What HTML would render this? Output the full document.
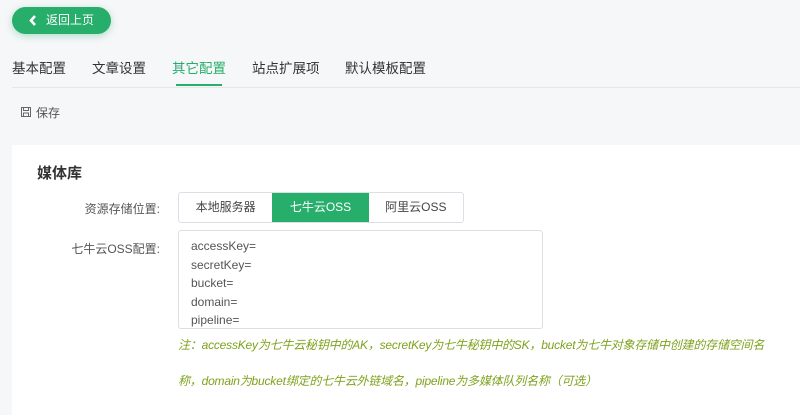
<!DOCTYPE html>
<html><head><meta charset="utf-8"><style>
*{margin:0;padding:0;box-sizing:border-box}
body{width:800px;height:415px;background:#f6f7f9;font-family:"Liberation Sans","Noto Sans CJK SC",sans-serif;color:#333;position:relative;overflow:hidden}
.back{position:absolute;left:12px;top:7px;width:99px;height:27px;border-radius:14px;background:#27ae6b;color:#fff;font-size:12px;line-height:27px;padding-left:34px;box-shadow:0 2px 8px rgba(39,174,107,.35)}
.back svg{position:absolute;left:17px;top:8px}
.tab{position:absolute;top:57px;font-size:13.5px;color:#333}
.line{position:absolute;left:12px;right:0;top:87px;height:1px;background:#e4e6ea}
.ul{position:absolute;left:176px;top:84px;width:46px;height:2px;background:#27ae6b}
.save{position:absolute;left:36px;top:104px;font-size:12px;color:#555}
.card{position:absolute;left:12px;top:145px;right:0;bottom:0;background:#fff}
.title{position:absolute;left:37px;top:162px;font-size:15px;font-weight:bold;color:#333}
.lbl{position:absolute;right:640px;font-size:12px;color:#555}
.seg{position:absolute;left:178px;top:192px;width:286px;height:31px;border:1px solid #dcdfe6;border-radius:3px;display:flex;font-size:12px;overflow:hidden}
.seg div{text-align:center;line-height:29px;color:#444}
.ta{position:absolute;left:178px;top:230px;width:365px;height:99px;border:1px solid #dcdfe6;border-radius:3px;padding:6px 12px;font-size:12px;line-height:18.6px;color:#555}
.note{position:absolute;left:178px;top:327px;width:600px;font-size:12px;font-style:italic;line-height:36px;color:#7ea21c;letter-spacing:-0.2px}
</style></head><body>
<div class="back"><svg width="8" height="11" viewBox="0 0 8 11"><path d="M6 1L2 5.5 6 10" stroke="#fff" stroke-width="2.6" fill="none"/></svg>返回上页</div>
<div class="tab" style="left:12px">基本配置</div>
<div class="tab" style="left:92px">文章设置</div>
<div class="tab" style="left:172px;color:#27ae6b">其它配置</div>
<div class="tab" style="left:252px">站点扩展项</div>
<div class="tab" style="left:345px">默认模板配置</div>
<div class="line"></div><div class="ul"></div>
<svg style="position:absolute;left:21px;top:107px" width="10" height="10" viewBox="0 0 10 10"><rect x="0.5" y="0.5" width="9" height="9" fill="none" stroke="#666"/><rect x="2.5" y="0.5" width="5" height="3" fill="none" stroke="#666"/><rect x="2.5" y="6" width="5" height="3.5" fill="none" stroke="#666"/></svg>
<div class="save">保存</div>
<div class="card"></div>
<div class="title">媒体库</div>
<div class="lbl" style="top:200px">资源存储位置:</div>
<div class="seg"><div style="width:94px">本地服务器</div><div style="width:97px;background:#27ae6b;color:#fff">七牛云OSS</div><div style="width:95px">阿里云OSS</div></div>
<div class="lbl" style="top:240px">七牛云OSS配置:</div>
<div class="ta">accessKey=<br>secretKey=<br>bucket=<br>domain=<br>pipeline=</div>
<div class="note">注：accessKey为七牛云秘钥中的AK，secretKey为七牛秘钥中的SK，bucket为七牛对象存储中创建的存储空间名<br>称，domain为bucket绑定的七牛云外链域名，pipeline为多媒体队列名称（可选）</div>
</body></html>
